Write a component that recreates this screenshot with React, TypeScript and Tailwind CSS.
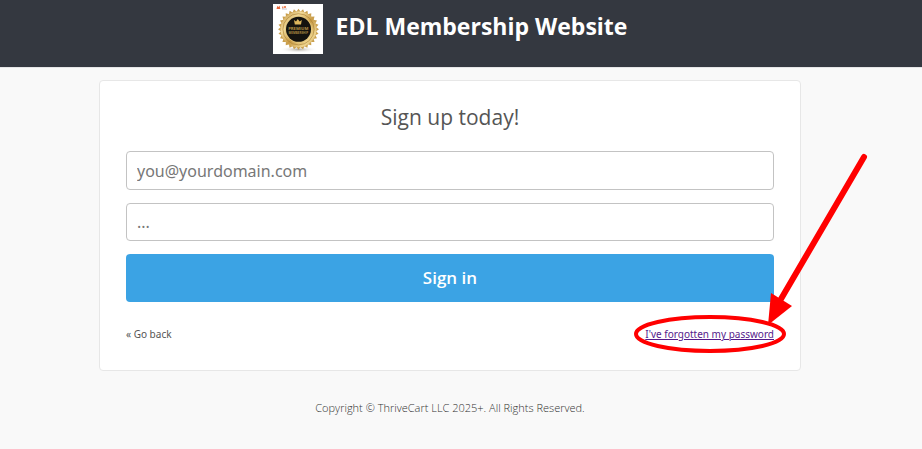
import React, { useState } from 'react';

const sealTeeth = Array.from({ length: 28 }, (_, i) => (i * 360) / 28);

function MembershipSeal() {
  return (
    <svg viewBox="0 0 50 50" className="w-[50px] h-[50px] shrink-0" role="img" aria-label="Premium membership seal">
      <defs>
        <linearGradient id="gold" x1="0" y1="0" x2="1" y2="1">
          <stop offset="0" stopColor="#b98a35" />
          <stop offset="0.3" stopColor="#f3dc9c" />
          <stop offset="0.55" stopColor="#c99b45" />
          <stop offset="0.8" stopColor="#f0d690" />
          <stop offset="1" stopColor="#a97a2b" />
        </linearGradient>
        <radialGradient id="shadow">
          <stop offset="0" stopColor="#8f8778" stopOpacity="0.7" />
          <stop offset="1" stopColor="#ffffff" stopOpacity="0" />
        </radialGradient>
      </defs>
      <rect width="50" height="50" fill="#fff" />
      <ellipse cx="25.5" cy="45.5" rx="19" ry="3.5" fill="url(#shadow)" />
      <path d="M3.5 5 L4.3 2 L5.5 3 L6.5 1.5 L7.3 5Z" fill="#e8663c" />
      <path d="M9 4.5 V2.5 H10.5 V4.5Z M11 2 H13 V4 H11Z" fill="#ee8b62" />
      <path d="M9 5 H14" stroke="#b9b9c4" strokeWidth="0.8" />
      {sealTeeth.map(angle => (
        <path key={angle} d="M23.2 8 L25.5 4.8 L27.8 8Z" fill="#c99f4e" transform={`rotate(${angle} 25.5 25.3)`} />
      ))}
      <circle cx="25.5" cy="25.3" r="18" fill="url(#gold)" />
      <circle cx="25.5" cy="25.3" r="15.6" fill="none" stroke="#a67c30" strokeWidth="0.6" />
      <circle cx="25.5" cy="25.3" r="13.2" fill="none" stroke="#e3c87e" strokeWidth="0.9" />
      <circle cx="25.5" cy="25.3" r="12.5" fill="#14130f" />
      <path d="M21 16 L23 17.6 L24.8 15 L26.6 17.6 L28.8 16 L28 20.5 H21.8Z" fill="#dcb65d" />
      <text x="25.3" y="26.3" textAnchor="middle" fontSize="4.2" fontWeight="700" fill="#b18f43">
        PREMIUM
      </text>
      <text x="25.3" y="30" textAnchor="middle" fontSize="3" fontWeight="700" fill="#a68640">
        MEMBERSHIP
      </text>
    </svg>
  );
}

function PasswordPointer() {
  return (
    <svg
      viewBox="632 151 236 204"
      className="absolute -right-[94px] -bottom-[13px] w-[236px] h-[204px] max-w-none pointer-events-none"
      fill="none"
      stroke="#ff0000"
      aria-hidden="true"
    >
      <ellipse cx="710" cy="334" rx="74" ry="17" strokeWidth="4" />
      <path d="M864 157 L781 299" strokeWidth="6" strokeLinecap="round" />
      <path d="M771 293 L792 306 L768 325Z" fill="#ff0000" stroke="none" />
    </svg>
  );
}

const inputClass =
  'block w-full px-[10px] border border-[#c3c3c3] rounded bg-white text-base text-[#555555] placeholder:text-[#777777] focus:outline-none focus:border-[#3ba3e4]';

export default function App() {
  const [email, setEmail] = useState('');
  const [password, setPassword] = useState('');

  const handleSubmit = (e: React.FormEvent) => {
    e.preventDefault();
  };

  return (
    <div className="min-h-screen overflow-x-hidden bg-[#f9f9f9] font-['Open_Sans','Noto_Sans',sans-serif] text-[#555555]">
      <header className="bg-[#343840] border-b border-[#e5e5e7] pr-[22px] pt-1 pb-[13px]">
        <div className="flex justify-center gap-[13px]">
          <MembershipSeal />
          <h1 className="text-[23px] leading-[44px] font-bold text-white">EDL Membership Website</h1>
        </div>
      </header>

      <div className="pr-[22px]">
        <main className="mx-auto mt-3 max-w-[702px] bg-white border border-[#e7e7e7] rounded px-[26px] pt-5 pb-7">
          <h2 className="text-center text-[21px] leading-8">Sign up today!</h2>

          <form
            onSubmit={handleSubmit}
            className="mt-[18px] space-y-[13px] font-['Noto_Sans','Open_Sans',sans-serif]"
          >
            <input
              type="email"
              aria-label="Email address"
              placeholder="you@yourdomain.com"
              value={email}
              onChange={e => setEmail(e.target.value)}
              className={`${inputClass} h-[39px]`}
            />
            <input
              type="password"
              aria-label="Password"
              placeholder="..."
              value={password}
              onChange={e => setPassword(e.target.value)}
              className={`${inputClass} h-[38px]`}
            />
            <button
              type="submit"
              className="block w-full h-12 rounded bg-[#3ba3e4] font-['Open_Sans','Noto_Sans',sans-serif] text-[17px] font-semibold text-white hover:bg-[#2f95d5]"
            >
              Sign in
            </button>
          </form>

          <div className="mt-6 flex items-center justify-between font-['Noto_Sans','Open_Sans',sans-serif] text-[10px] leading-4">
            <a href="#back">« Go back</a>
            <span className="relative">
              <a href="#forgotten" className="underline text-[#551a8b]">
                I've forgotten my password
              </a>
              <PasswordPointer />
            </span>
          </div>
        </main>

        <footer className="py-[29px] text-center text-[11px] leading-4 font-light text-[#333333]">
          Copyright © ThriveCart LLC 2025+. All Rights Reserved.
        </footer>
      </div>
    </div>
  );
}
